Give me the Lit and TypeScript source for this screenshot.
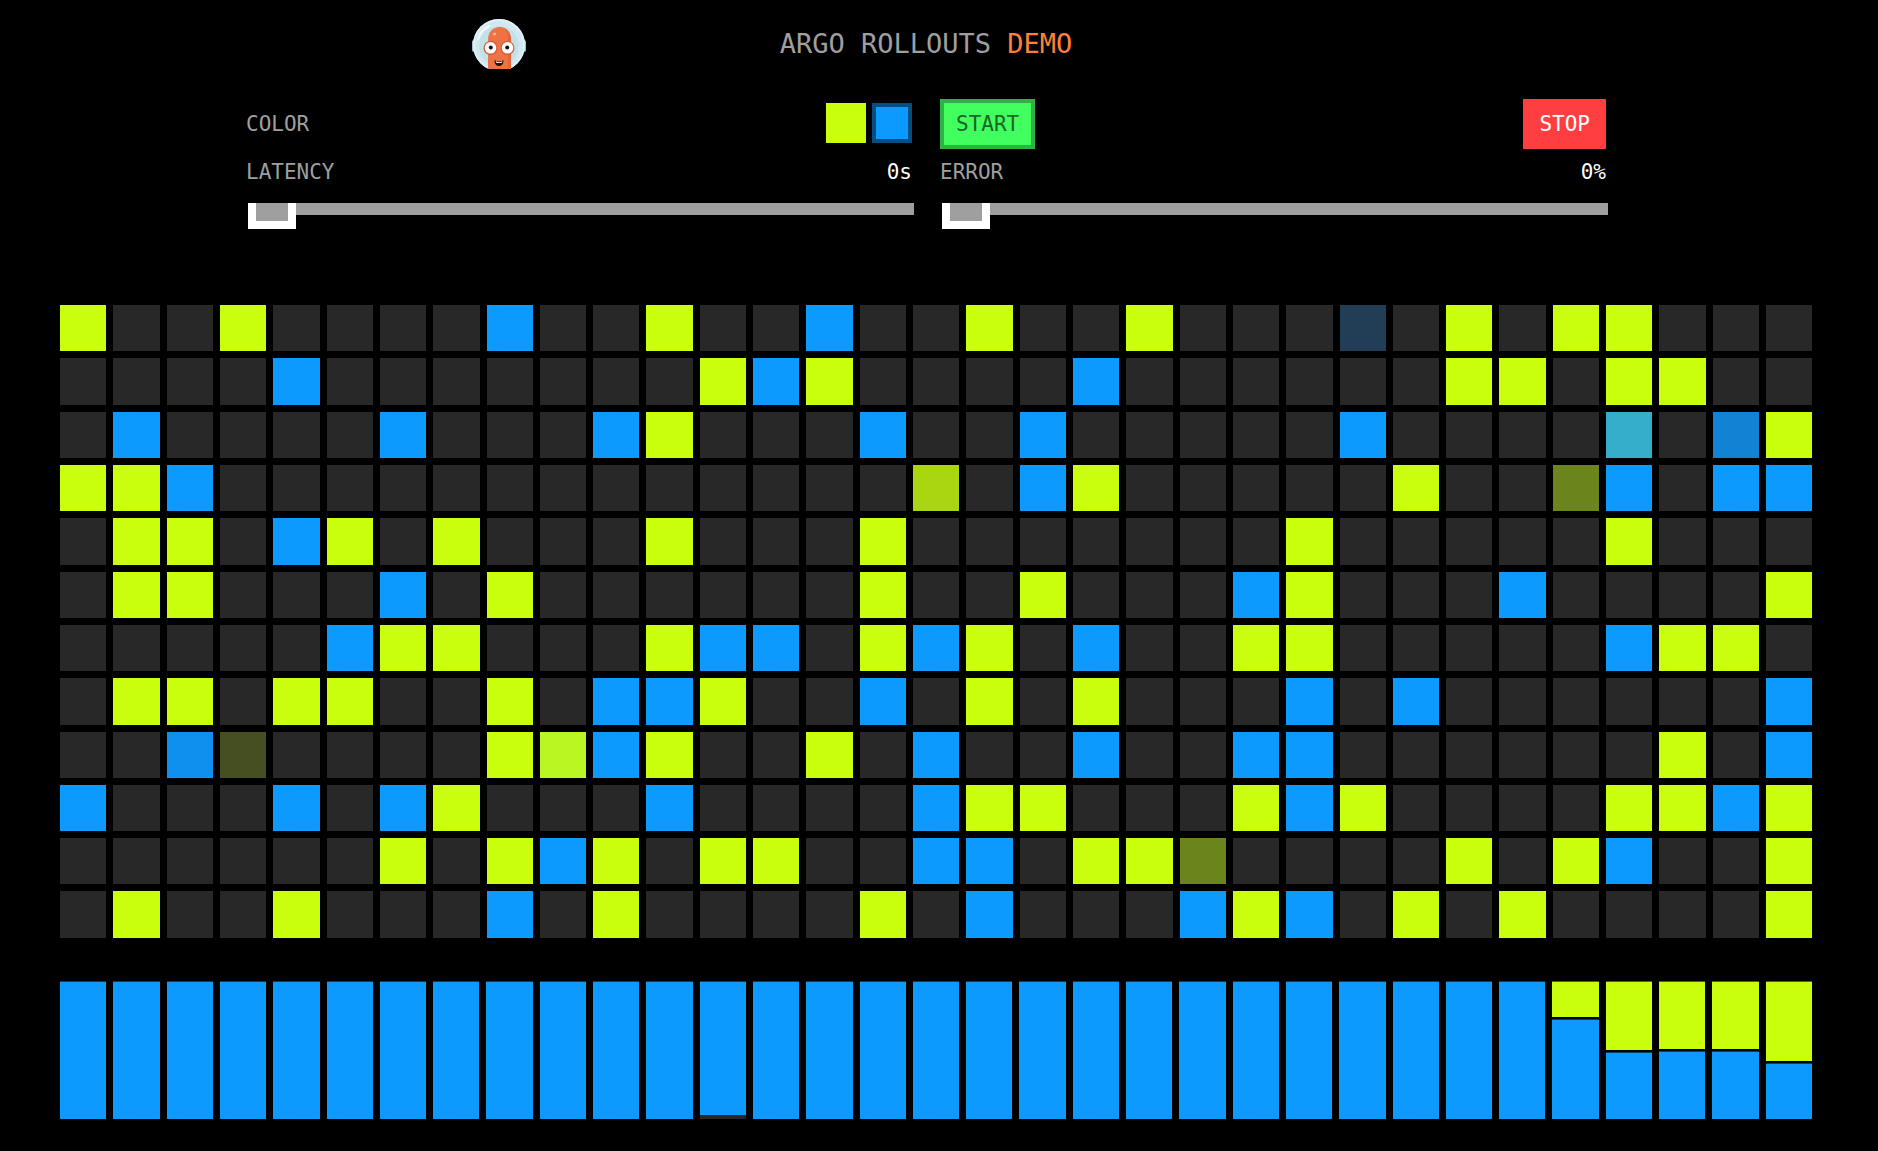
import { LitElement, html, css } from "lit";
import { customElement, state } from "lit/decorators.js";

const COLUMNS = 33;

/* Shades: g green, b blue; the rest are cells part-way through a fade. */
const SHADES: Record<string, string> = {
  g: "green",
  b: "blue",
  n: "navy",
  t: "teal",
  d: "deep",
  m: "moss",
  o: "olive",
  s: "sky",
  f: "forest",
  l: "lime",
};

const ROWS = [
  "g0 g3 b8 g11 b14 g17 g20 n24 g26 g28 g29",
  "b4 g12 b13 g14 b19 g26 g27 g29 g30",
  "b1 b6 b10 g11 b15 b18 b24 t29 d31 g32",
  "g0 g1 b2 m16 b18 g19 g25 o28 b29 b31 b32",
  "g1 g2 b4 g5 g7 g11 g15 g23 g29",
  "g1 g2 b6 g8 g15 g18 b22 g23 b27 g32",
  "b5 g6 g7 g11 b12 b13 g15 b16 g17 b19 g22 g23 b29 g30 g31",
  "g1 g2 g4 g5 g8 b10 b11 g12 b15 g17 g19 b23 b25 b32",
  "s2 f3 g8 l9 b10 g11 g14 b16 b19 b22 b23 g30 b32",
  "b0 b4 b6 g7 b11 b16 g17 g18 g22 b23 g24 g29 g30 b31 g32",
  "g6 g8 b9 g10 g12 g13 b16 b17 g19 g20 o21 g26 g28 b29 g32",
  "g1 g4 b8 g10 g15 b17 b21 g22 b23 g25 g27 g32",
];

const CELLS: string[] = ROWS.flatMap((row) => {
  const cells = new Array<string>(COLUMNS).fill("");
  for (const item of row.split(" ")) {
    cells[Number(item.slice(1))] = SHADES[item[0]];
  }
  return cells;
});

interface Bar {
  green: number;
  blue: number;
  idle: number;
}

/* Share of requests answered by each colour, in percent. */
const SPECIAL: Record<number, Bar> = {
  12: { green: 0, blue: 97, idle: 3 },
  28: { green: 26, blue: 74, idle: 0 },
  29: { green: 51, blue: 49, idle: 0 },
  30: { green: 50, blue: 50, idle: 0 },
  31: { green: 50, blue: 50, idle: 0 },
  32: { green: 59, blue: 41, idle: 0 },
};

const BARS: Bar[] = Array.from(
  { length: COLUMNS },
  (_, i) => SPECIAL[i] ?? { green: 0, blue: 100, idle: 0 }
);

@customElement("app-root")
export class AppRoot extends LitElement {
  @state() private running = true;
  @state() private selected = "blue";
  @state() private latency = 0;
  @state() private error = 0;

  static styles = css`
    :host {
      display: block;
      box-sizing: border-box;
      min-height: 100vh;
      padding-bottom: 32px;
      background: #000;
      color: #9f9f9f;
      font: 21px/24px "DejaVu Sans Mono", monospace;
    }
    * {
      box-sizing: border-box;
    }
    .header {
      display: grid;
      grid-template-columns: 1fr auto 1fr;
      align-items: center;
      padding: 19px 272px 30px 246px;
    }
    .logo {
      display: block;
      width: 54px;
      height: 50px;
      justify-self: center;
      margin-right: 28px;
    }
    .title {
      margin: 0;
      font-size: 27px;
      line-height: 32px;
      font-weight: 400;
    }
    .accent {
      color: #ff8139;
    }
    .controls {
      display: grid;
      grid-template-columns: 1fr 1fr;
      column-gap: 28px;
      padding: 0 272px 0 246px;
    }
    .row {
      display: flex;
      align-items: center;
      justify-content: space-between;
      height: 50px;
    }
    .row.reading {
      height: 46px;
    }
    .swatches {
      display: flex;
      gap: 6px;
      padding-bottom: 2px;
    }
    button {
      border: 0;
      border-radius: 0;
      margin: 0;
      font: inherit;
      cursor: pointer;
    }
    .swatch {
      width: 40px;
      height: 40px;
      padding: 0;
    }
    .swatch.active {
      border: 4px solid #064d80;
    }
    .action {
      height: 50px;
      padding: 0 16px;
      color: #fff;
    }
    .start {
      background: #41ff5f;
    }
    .stop {
      background: #ff3f3f;
    }
    .action.active {
      padding: 0 12px;
    }
    .start.active {
      border: 4px solid #2db243;
      color: #1a6626;
    }
    .stop.active {
      border: 4px solid #b22c2c;
      color: #661919;
    }
    .value {
      color: #fff;
    }
    .slider {
      appearance: none;
      -webkit-appearance: none;
      display: block;
      width: 100%;
      height: 26px;
      margin: 8px 2px 0;
      overflow: hidden;
      background: transparent;
    }
    .slider::-webkit-slider-runnable-track {
      height: 26px;
      background: linear-gradient(#9f9f9f 12px, transparent 12px);
    }
    .slider::-webkit-slider-thumb {
      -webkit-appearance: none;
      box-sizing: border-box;
      width: 48px;
      height: 34px;
      margin-top: -8px;
      border: 8px solid #fff;
      border-radius: 0;
      background: #9f9f9f;
    }
    .cells,
    .bars {
      display: grid;
      grid-template-columns: repeat(33, 1fr);
      gap: 7px;
      padding: 0 66px 0 60px;
    }
    .cells {
      margin-top: 76px;
    }
    .bars {
      margin-top: 43px;
    }
    .cell {
      aspect-ratio: 1;
      background: #282828;
    }
    .bar {
      display: flex;
      flex-direction: column;
      gap: 2px;
      height: 138px;
    }
    .segment {
      flex: 1 1 0;
      border-top: 1px solid;
    }
    .idle {
      height: 4px;
      margin-top: -2px;
      background: #282828;
    }
    .green {
      background: #c9ff0d;
      border-color: #50660a;
    }
    .blue {
      background: #0d9aff;
      border-color: #0a3d66;
    }
    .navy {
      background: #213e56;
    }
    .teal {
      background: #35aecb;
    }
    .deep {
      background: #1182d4;
    }
    .moss {
      background: #a9d611;
    }
    .olive {
      background: #6b841b;
    }
    .sky {
      background: #1090ee;
    }
    .forest {
      background: #454f22;
    }
    .lime {
      background: #b9f722;
    }
  `;

  private swatch(name: string) {
    const active = this.selected === name;
    return html`<button
      class="swatch ${name} ${active ? "active" : ""}"
      aria-label=${name}
      aria-pressed=${active}
      @click=${() => (this.selected = name)}
    ></button>`;
  }

  private logo() {
    return html`<svg class="logo" viewBox="0 0 54 50" aria-hidden="true">
      <rect x="0" y="21" width="54" height="12" rx="2" fill="#a3bfdc" />
      <circle cx="27" cy="26" r="26" fill="#d2e8f0" />
      <circle cx="27" cy="26" r="25" fill="none" stroke="#deeff6" stroke-width="2" />
      <circle cx="27" cy="27" r="20" fill="#c3e1e8" />
      <path d="M6 20A22 22 0 0 1 17 7" fill="none" stroke="#f2fafc" stroke-width="2" stroke-linecap="round" />
      <path d="M16 50V21c0-8 5-13 11.500-13S39 13 39 21v29z" fill="#ee7243" />
      <path d="M32 9c5 2 7 7 7 12v29h-3V22c0-6-1-10-4-13z" fill="#e46638" />
      <circle cx="22.500" cy="15" r="1.600" fill="#f9b497" />
      <circle cx="18.500" cy="29" r="7" fill="#d95a38" />
      <circle cx="35.500" cy="29" r="7" fill="#d95a38" />
      <circle cx="18.500" cy="28.800" r="5.800" fill="#fff" />
      <circle cx="35.500" cy="28.800" r="5.800" fill="#fff" />
      <circle cx="18.800" cy="28.500" r="2" fill="#111" />
      <circle cx="35.200" cy="28.500" r="2" fill="#111" />
      <path d="M22.500 41q5 3 9 0q0 6-4.500 6t-4.500-6z" fill="#27120e" />
      <path d="M23.500 42q4 2.500 7 0l-1 2h-5z" fill="#fff" />
    </svg>`;
  }

  render() {
    return html`
      <header class="header">
        ${this.logo()}
        <h1 class="title">ARGO ROLLOUTS <span class="accent">DEMO</span></h1>
      </header>
      <section class="controls">
        <div>
          <div class="row">
            <span>COLOR</span>
            <div class="swatches">${this.swatch("green")}${this.swatch("blue")}</div>
          </div>
          <div class="row reading">
            <label for="latency">LATENCY</label>
            <span class="value">${this.latency}s</span>
          </div>
          <input
            class="slider"
            id="latency"
            type="range"
            min="0"
            max="10"
            .value=${String(this.latency)}
            @input=${(e: Event) =>
              (this.latency = Number((e.target as HTMLInputElement).value))}
          />
        </div>
        <div>
          <div class="row">
            <button
              class="action start ${this.running ? "active" : ""}"
              @click=${() => (this.running = true)}
            >START</button>
            <button
              class="action stop ${this.running ? "" : "active"}"
              @click=${() => (this.running = false)}
            >STOP</button>
          </div>
          <div class="row reading">
            <label for="error">ERROR</label>
            <span class="value">${this.error}%</span>
          </div>
          <input
            class="slider"
            id="error"
            type="range"
            min="0"
            max="100"
            .value=${String(this.error)}
            @input=${(e: Event) =>
              (this.error = Number((e.target as HTMLInputElement).value))}
          />
        </div>
      </section>
      <main>
        <div class="cells">
          ${CELLS.map((shade) => html`<div class="cell ${shade}"></div>`)}
        </div>
        <div class="bars">
          ${BARS.map(
            (bar) => html`<div class="bar">
              ${bar.green
                ? html`<div class="segment green" style="flex-grow:${bar.green}"></div>`
                : ""}
              <div class="segment blue" style="flex-grow:${bar.blue}"></div>
              ${bar.idle ? html`<div class="idle"></div>` : ""}
            </div>`
          )}
        </div>
      </main>
    `;
  }
}
